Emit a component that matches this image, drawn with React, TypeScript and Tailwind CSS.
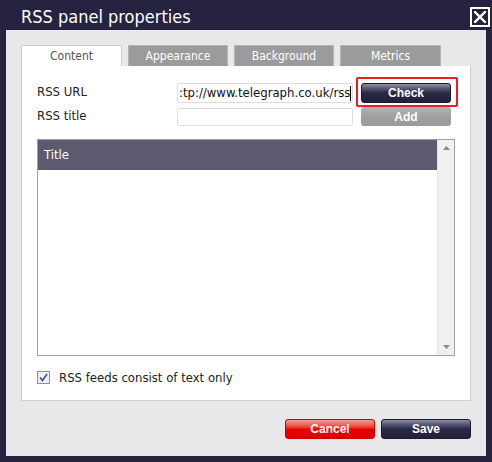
import React from 'react';

const labelFont = { fontFamily: '"DejaVu Sans Condensed", "DejaVu Sans", sans-serif' };
const btnFont = { fontFamily: '"Liberation Sans", Arial, sans-serif' };

function Tab({ label, active, wide }: { label: string; active?: boolean; wide?: boolean }) {
  const size = wide ? 'w-[101px]' : 'w-[100px]';
  return (
    <div
      className={
        active
          ? `flex h-[21px] ${size} items-center justify-center border border-b-0 border-[#cfcfd2] bg-white text-[12px] text-[#555]`
          : `flex h-[21px] ${size} items-center justify-center border border-b-0 border-[#b5b5b5] bg-[#9b9b9b] text-[12px] text-white`
      }
    >
      {label}
    </div>
  );
}

export default function App() {
  return (
    <div className="flex h-[462px] w-[492px] flex-col bg-[#25233f]" style={labelFont}>
      <div className="relative flex h-[30px] items-center pl-[21px] pt-[2px] text-[18px] text-white">
        RSS panel properties
        <div className="absolute left-[470px] top-[7px] flex size-[20px] items-center justify-center border-2 border-white">
          <svg width="12" height="12" viewBox="0 0 12 12">
            <path d="M1 1 L11 11 M11 1 L1 11" stroke="white" strokeWidth="2.4" strokeLinecap="square" />
          </svg>
        </div>
      </div>

      <div className="mx-[6px] flex h-[426px] flex-col bg-[#e8e8ea] px-[15px] pt-[15px]">
        <div className="flex gap-[6px]">
          <Tab label="Content" active wide />
          <Tab label="Appearance" />
          <Tab label="Background" />
          <Tab label="Metrics" wide />
        </div>

        <div className="flex h-[335px] w-[450px] flex-col border border-t-0 border-[#cfcfd2] bg-white px-[15px] pt-[17px]">
          <div className="flex h-[20px] items-center">
            <div className="w-[140px] pb-[3px] text-[13px] leading-[16px] text-[#222]">RSS URL</div>
            <div className="flex h-[20px] w-[176px] items-center overflow-hidden rounded-[2px] border border-[#dadde4] pl-[1px] text-[13px] leading-[16px] text-[#111] whitespace-nowrap">
              :tp://www.telegraph.co.uk/rss
              <span className="inline-block h-[15px] w-px shrink-0 bg-black" />
            </div>
            <div className="relative ml-[8px]">
              <div className="absolute left-[-5px] top-[-6px] h-[30px] w-[102px] rounded-[2px] border-2 border-[#ec1c24]" />
              <button
                type="button"
                className="flex h-[20px] w-[90px] items-center justify-center rounded-[3px] border border-[#1c1b30] bg-gradient-to-b from-[#8d8ca3] via-[#2a2945] to-[#22213b] text-[12px] font-bold text-white"
                style={btnFont}
              >
                Check
              </button>
            </div>
          </div>

          <div className="mt-[4px] flex h-[19px] items-center">
            <div className="w-[140px] pb-[2px] text-[13px] leading-[16px] text-[#222]">RSS title</div>
            <div className="h-[18px] w-[176px] rounded-[2px] border border-[#dadde4]" />
            <button
              type="button"
              className="ml-[8px] flex h-[19px] w-[90px] items-center justify-center rounded-[3px] bg-gradient-to-b from-[#b4b4b4] via-[#a0a0a0] to-[#9a9a9a] text-[12px] font-bold text-white"
              style={btnFont}
            >
              Add
            </button>
          </div>

          <div className="mt-[13px] flex h-[217px] w-[418px] border border-[#a0a0a0]">
            <div className="flex-1">
              <div className="flex h-[30px] items-center bg-[#5b5a70] pl-[6px] text-[13px] text-white">Title</div>
            </div>
            <div className="flex w-[17px] flex-col items-center justify-between border-l border-[#e4e4e4] bg-[#f0f0f0] py-[6px]">
              <svg width="7" height="4" viewBox="0 0 7 4">
                <path d="M3.5 0 L7 4 L0 4 Z" fill="#8a8a8a" />
              </svg>
              <svg width="7" height="4" viewBox="0 0 7 4">
                <path d="M0 0 L7 0 L3.5 4 Z" fill="#8a8a8a" />
              </svg>
            </div>
          </div>

          <div className="mt-[15px] flex h-[13px] items-center">
            <div className="flex size-[13px] items-center justify-center border border-[#8f8f9a] bg-[#eef0f4]">
              <svg width="9" height="9" viewBox="0 0 9 9">
                <path d="M1 4.5 L3.5 7.5 L8 1" stroke="#3a4aa8" strokeWidth="1.6" fill="none" />
              </svg>
            </div>
            <span className="ml-[9px] text-[13px] leading-[16px] text-[#222]">RSS feeds consist of text only</span>
          </div>
        </div>

        <div className="mt-[18px] flex w-[450px] justify-end gap-[6px]">
          <button
            type="button"
            className="flex h-[20px] w-[90px] items-center justify-center rounded-[3px] border border-[#c80000] bg-gradient-to-b from-[#f49a9a] via-[#e80000] to-[#e00000] text-[12px] font-bold text-white"
            style={btnFont}
          >
            Cancel
          </button>
          <button
            type="button"
            className="flex h-[20px] w-[90px] items-center justify-center rounded-[3px] border border-[#1c1b30] bg-gradient-to-b from-[#8d8ca3] via-[#2a2945] to-[#22213b] text-[12px] font-bold text-white"
            style={btnFont}
          >
            Save
          </button>
        </div>
      </div>
    </div>
  );
}
